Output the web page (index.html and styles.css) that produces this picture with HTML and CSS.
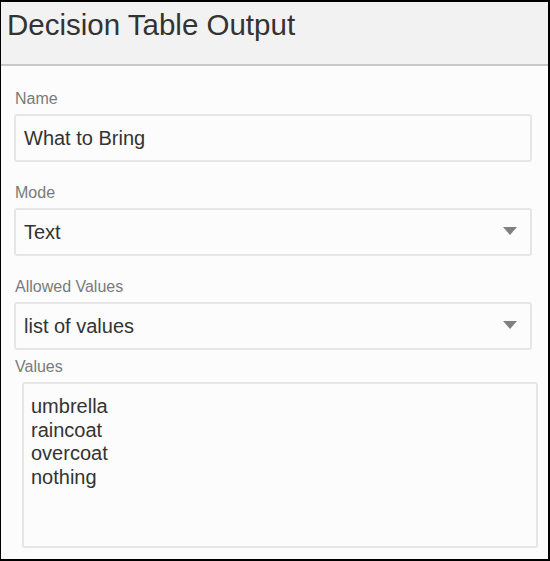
FILE: index.html
```html
<!DOCTYPE html>
<html>
<head>
<meta charset="utf-8">
<link rel="stylesheet" href="styles.css">
</head>
<body>
<div class="panel">
  <div class="panel-header">
    <h1 class="panel-title">Decision Table Output</h1>
  </div>
  <div class="panel-body">
    <div class="field">
      <div class="field-label">Name</div>
      <div class="text-input">What to Bring</div>
    </div>
    <div class="field">
      <div class="field-label">Mode</div>
      <div class="text-input select">
        <span>Text</span>
        <svg class="caret" width="14" height="8" viewBox="0 0 14 8"><path d="M0 0 H14 L7 8 Z" fill="#808080"/></svg>
      </div>
    </div>
    <div class="field field-tight">
      <div class="field-label">Allowed Values</div>
      <div class="text-input select">
        <span>list of values</span>
        <svg class="caret" width="14" height="8" viewBox="0 0 14 8"><path d="M0 0 H14 L7 8 Z" fill="#808080"/></svg>
      </div>
    </div>
    <div class="field field-values">
      <div class="field-label">Values</div>
      <div class="text-area">umbrella
raincoat
overcoat
nothing</div>
    </div>
  </div>
</div>
</body>
</html>
```
FILE: styles.css
```css
* { box-sizing: border-box; }
html, body { margin: 0; padding: 0; background: #fcfcfc; }
body {
  font-family: "Liberation Sans", Arial, sans-serif;
  color: #333;
}
.panel {
  width: 550px;
  height: 561px;
  border-style: solid;
  border-color: #000;
  border-width: 2px 2px 2px 1px;
  background: #fcfcfc;
  display: flex;
  flex-direction: column;
  overflow: hidden;
}
.panel-header {
  flex-shrink: 0;
  background: #f2f2f2;
  border-bottom: 2px solid #c8c8c8;
  height: 64px;
  padding: 5px 6px 0;
}
.panel-title {
  margin: 0;
  font-size: 29.5px;
  font-weight: normal;
  line-height: 36px;
  color: #333;
}
.panel-body {
  flex-shrink: 0;
  padding: 22px 16px 0 13px;
  display: flex;
  flex-direction: column;
}
.field {
  display: flex;
  flex-direction: column;
  gap: 4px;
  margin-bottom: 20px;
}
.field-tight { margin-bottom: 6px; }
.field-label {
  font-size: 16px;
  line-height: 22px;
  color: #7a7a7a;
  padding-left: 1px;
}
.text-input {
  flex-shrink: 0;
  height: 48px;
  border: 2px solid #e6e6e6;
  border-radius: 3px;
  background: #fcfcfc;
  padding: 0 8px;
  font-size: 20px;
  display: flex;
  align-items: center;
  color: #333;
}
.select {
  justify-content: space-between;
  padding-right: 13px;
}
.caret { display: block; margin-top: -3px; }
.text-area {
  flex-shrink: 0;
  margin-left: 8px;
  margin-right: -6px;
  height: 166px;
  border: 2px solid #e6e6e6;
  border-radius: 3px;
  background: #fcfcfc;
  padding: 11px 7px;
  font-size: 20px;
  line-height: 23.5px;
  white-space: pre-line;
  color: #333;
}
```
